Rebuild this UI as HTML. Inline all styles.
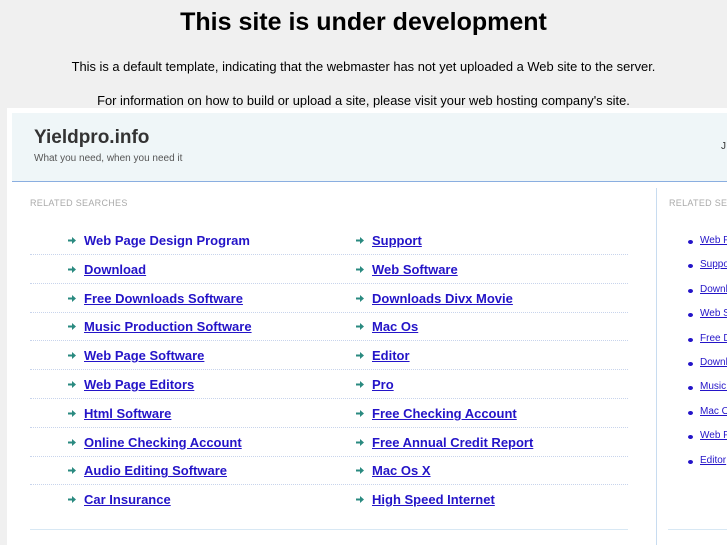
<!DOCTYPE html>
<html><head><style>
html,body{margin:0;width:727px;height:545px;overflow:hidden}
body{background:#f0f0f0;font-family:"Liberation Sans",sans-serif;position:relative}
.a{position:absolute;white-space:nowrap}
h1{position:absolute;top:8px;left:0;width:727px;text-align:center;margin:0;font-size:25px;font-weight:bold;color:#000}
.p{position:absolute;left:0;width:727px;text-align:center;font-size:12.9px;color:#000}
#box{position:absolute;left:7px;top:108px;width:720px;height:437px;background:#fff}
#hd{position:absolute;left:12px;top:113px;width:715px;height:68px;background:#eff6f8;border-bottom:1px solid #8aaee0}
.row{position:absolute;left:30px;width:598px;height:28px;border-bottom:1px dotted #c8d4ec}
.l{position:absolute;font-size:13px;font-weight:bold;color:#2414c8;text-decoration:underline;top:7px}
.ar{position:absolute;top:11px;line-height:0}
.r{position:absolute;left:700px;font-size:10px;color:#2414c8;text-decoration:underline;white-space:nowrap}
.b{position:absolute;left:688px;width:5px;height:4px;border-radius:50%;background:#2414c8}
</style></head><body>
<h1>This site is under development</h1>
<div class="p" style="top:59px">This is a default template, indicating that the webmaster has not yet uploaded a Web site to the server.</div>
<div class="p" style="top:93px">For information on how to build or upload a site, please visit your web hosting company's site.</div>
<div id="box"></div>
<div id="hd"></div>
<div class="a" style="left:34px;top:127px;font-size:19px;font-weight:bold;color:#333">Yieldpro.info</div>
<div class="a" style="left:34px;top:153px;font-size:10px;color:#555">What you need, when you need it</div>
<div class="a" style="left:721px;top:141px;font-size:10px;color:#333">J</div>
<div class="a" style="left:30px;top:198px;font-size:9px;color:#aaa;letter-spacing:.3px">RELATED SEARCHES</div>
<div class="a" style="left:669px;top:198px;font-size:9px;color:#aaa;letter-spacing:.3px">RELATED SEARCHES</div>
<div class="a" style="left:656px;top:188px;width:1px;height:357px;background:#c8dcf0"></div>
<div class="a" style="left:30px;top:529px;width:598px;height:1px;background:#d8e8f4"></div>
<div class="a" style="left:668px;top:529px;width:59px;height:1px;background:#d8e8f4"></div>
<div id="rows"></div>
<script>
var L=["Web Page Design Program","Download","Free Downloads Software","Music Production Software","Web Page Software","Web Page Editors","Html Software","Online Checking Account","Audio Editing Software","Car Insurance"];
var R=["Support","Web Software","Downloads Divx Movie","Mac Os","Editor","Pro","Free Checking Account","Free Annual Credit Report","Mac Os X","High Speed Internet"];
var S=["Web Page Design","Support","Download","Web Software","Free Downloads","Downloads Divx","Music Production","Mac Os","Web Page","Editor"];
var arr='<svg width="8" height="7" viewBox="0 0 8 7"><path d="M0 2.5h4V0l4 3.5L4 7V4.5H0z" fill="#2a8a80"/></svg>';
var h='';
for(var i=0;i<10;i++){var t=226+i*28.8;
h+='<div class="row" style="top:'+t+'px;'+(i==9?'border:none':'')+'"><span class="ar" style="left:38px;top:11px">'+arr+'</span><span class="l" style="left:54px;'+(i==0?'text-decoration:none':'')+'">'+L[i]+'</span><span class="ar" style="left:326px;top:11px">'+arr+'</span><span class="l" style="left:342px">'+R[i]+'</span></div>';
var y=235+i*24.4;h+='<div class="b" style="top:'+(y+5)+'px"></div><div class="r" style="top:'+y+'px">'+S[i]+'</div>';}
document.getElementById('rows').innerHTML=h;
</script>
</body></html>
